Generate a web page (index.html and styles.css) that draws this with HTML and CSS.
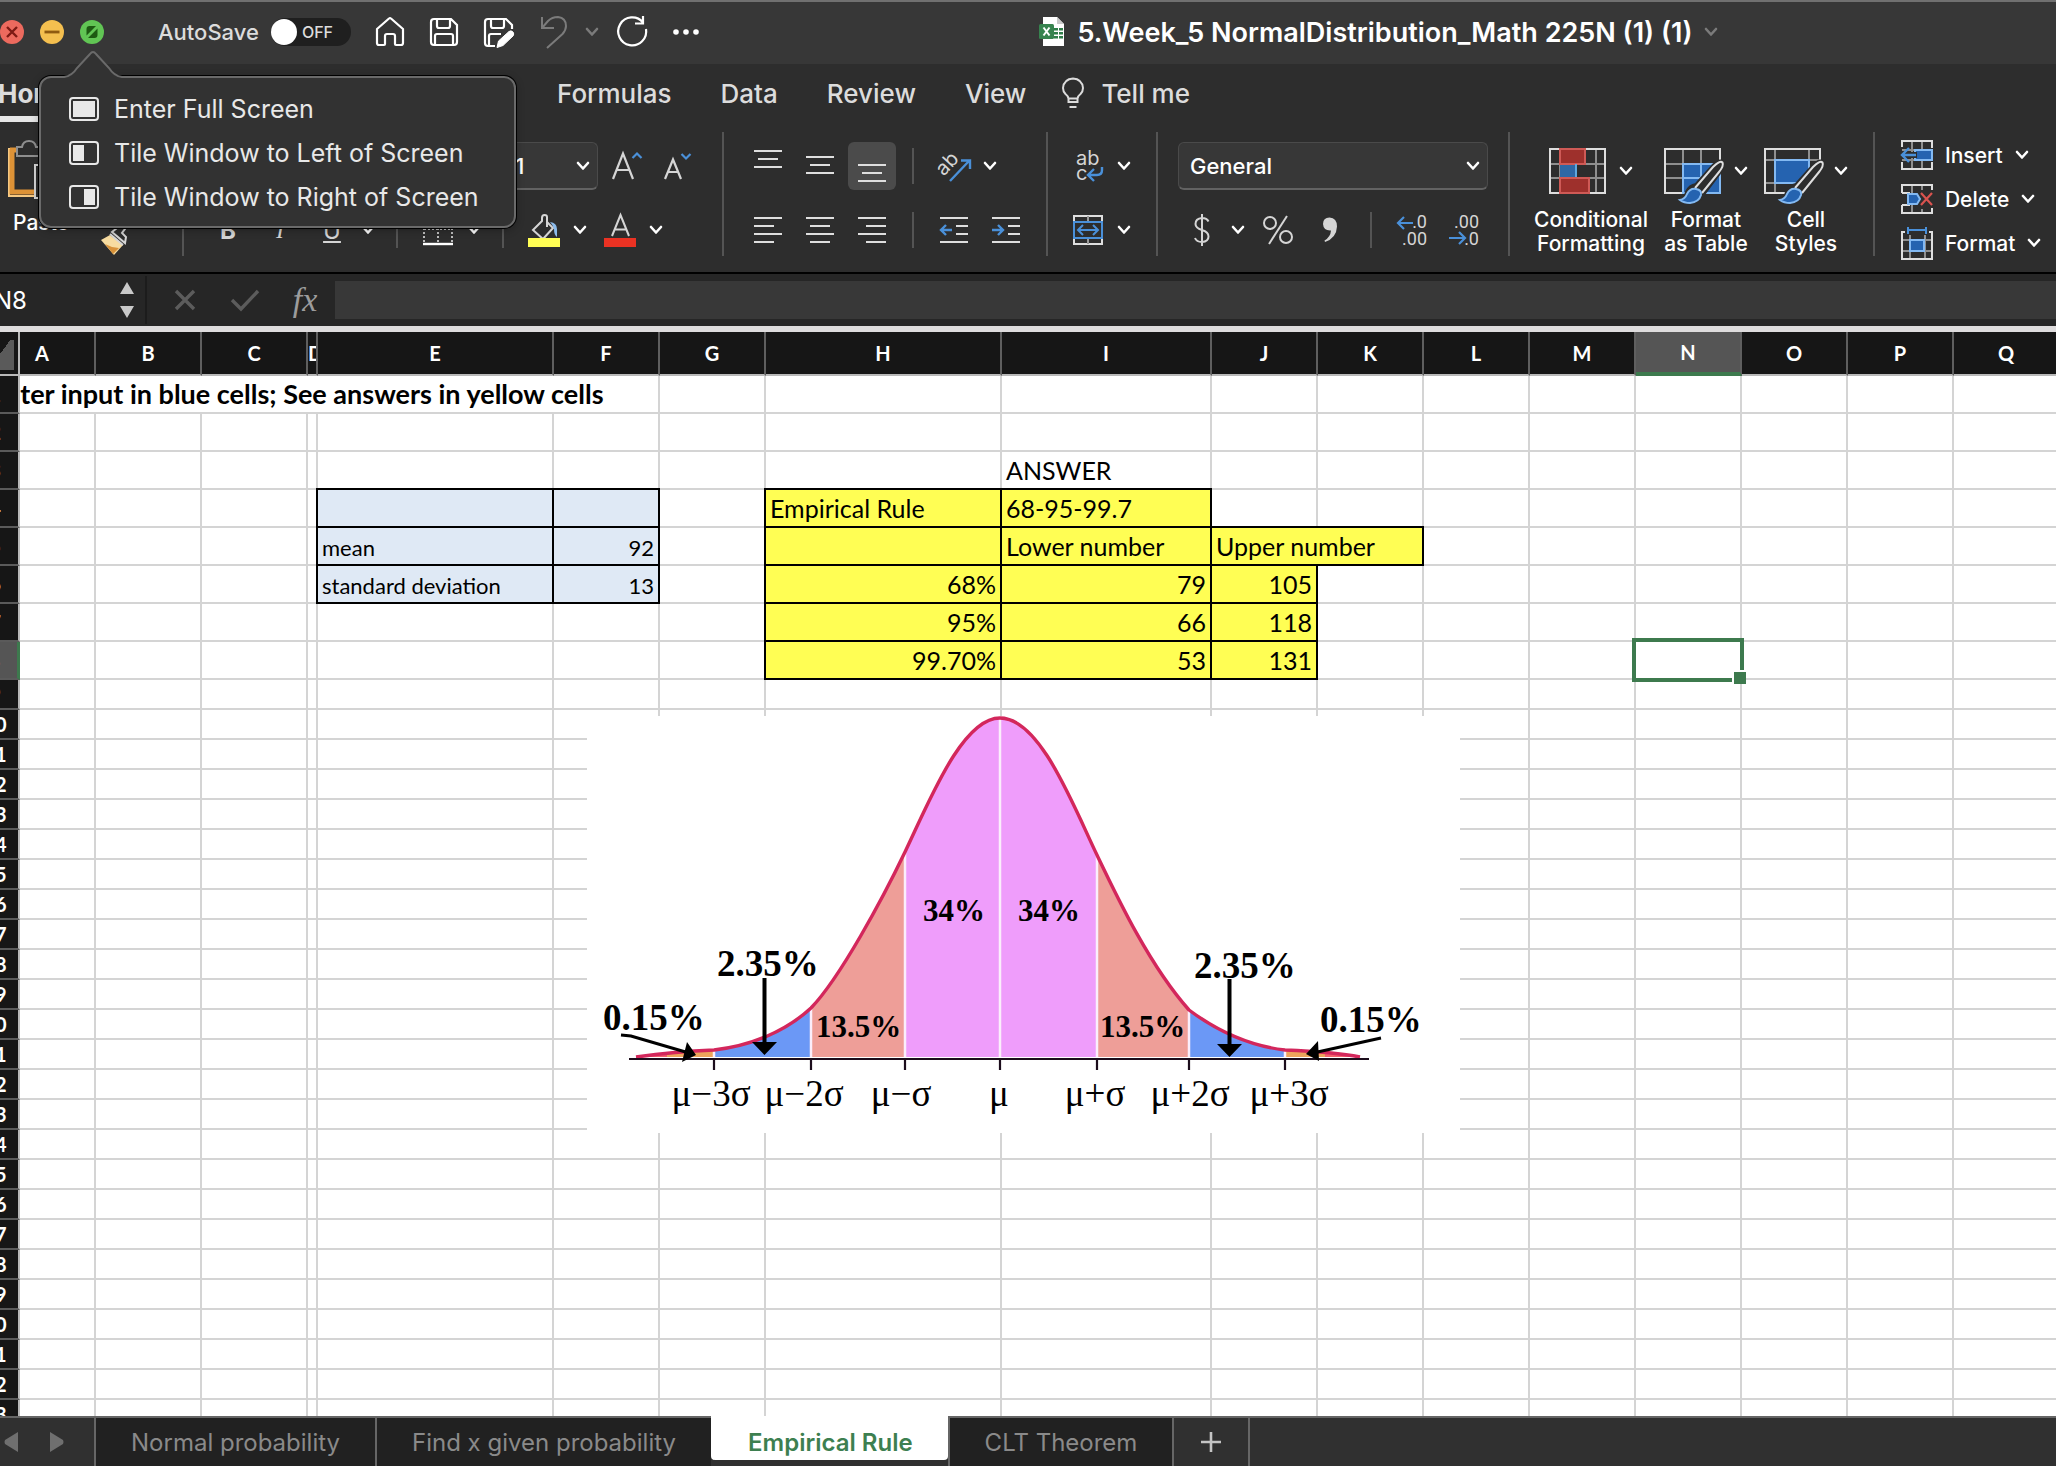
FILE: index.html
```
<!DOCTYPE html>
<html lang="en">
<head>
    <meta charset="UTF-8">
    <meta name="viewport" content="width=device-width, initial-scale=1.0">
    <title>5.Week_5 NormalDistribution_Math 225N (1) (1)</title>
    <link rel="stylesheet" href="styles.css">
</head>
<body>
    <!-- shared chevron -->
    <svg class="defs" width="0" height="0" aria-hidden="true">
        <symbol id="chev" viewBox="0 0 14 10"><path d="M2 2l5 5.5L12 2" fill="none" stroke="currentColor" stroke-width="2.6" stroke-linecap="round" stroke-linejoin="round"/></symbol>
    </svg>

    <div class="window">
        <header class="titlebar">
            <div class="lights">
                <button class="light light-close" aria-label="Close"><svg viewBox="0 0 24 24"><path d="M7 7l10 10M17 7L7 17" stroke="#7d1a14" stroke-width="2.4"/></svg></button>
                <button class="light light-min" aria-label="Minimize"><svg viewBox="0 0 24 24"><path d="M4.500 12h15" stroke="#8f5a10" stroke-width="2.8"/></svg></button>
                <button class="light light-zoom" aria-label="Zoom"><svg viewBox="0 0 24 24"><path d="M6.500 15.500V9q0-3 3-3H16zM17.500 8.500V15q0 3-3 3H8z" fill="#1d5a12"/></svg></button>
            </div>
            <label class="autosave">
                <span>AutoSave</span>
                <input type="checkbox" class="autosave-input">
                <span class="switch"><span class="knob"></span>OFF</span>
            </label>
            <div class="quick">
                <button class="quick-btn" aria-label="Home"><svg width="30" height="32" viewBox="0 0 30 32"><path d="M14 2.500q1-1 2 0L28 13v14q0 2-2 2h-5q-1 0-1-1v-8q0-2-2-2h-6q-2 0-2 2v8q0 1-1 1H4q-2 0-2-2V13z" fill="none" stroke="#fff" stroke-width="2.200" stroke-linejoin="round"/></svg></button>
                <button class="quick-btn" aria-label="Save"><svg width="30" height="32" viewBox="0 0 30 32"><path d="M5 3h17l6 6v17q0 3-3 3H5q-3 0-3-3V6q0-3 3-3zM8 3v7q0 2 2 2h9q2 0 2-2V3M6 29V20q0-2 2-2h14q2 0 2 2v9" fill="none" stroke="#fff" stroke-width="2.200"/></svg></button>
                <button class="quick-btn" aria-label="Save as"><svg width="32" height="34" viewBox="0 0 32 34"><path d="M12 31H5q-3 0-3-3V7q0-3 3-3h18l6 6v4M8 4v7q0 2 2 2h9q2 0 2-2V4M6 31V21q0-2 2-2h10" fill="none" stroke="#fff" stroke-width="2.200"/><path d="M14 32.500l1.500-6.500L26 16.500q2-1.500 4 .5 1.500 2 0 4l-10 9.500z" fill="#fff" stroke="#fff"/></svg></button>
                <button class="quick-btn quick-undo" aria-label="Undo"><svg width="30" height="34" viewBox="0 0 30 34"><path d="M3 2v11h12M3 13L9 6q4-4 10-4 8 1 8 9 0 4-3.500 8L8 33" fill="none" stroke="#7b7b7b" stroke-width="2"/></svg></button>
                <button class="quick-chev" aria-label="Undo history"><svg width="14" height="10"><use href="#chev"/></svg></button>
                <button class="quick-btn" aria-label="Redo"><svg width="32" height="34" viewBox="0 0 32 34"><path d="M27 7.500A14 14 0 1 0 30 14M27 1v7.500h-8" fill="none" stroke="#fff" stroke-width="2.200"/></svg></button>
                <button class="quick-btn" aria-label="More"><svg width="28" height="8" viewBox="0 0 28 8"><g fill="#fff"><circle cx="4" cy="4" r="2.800"/><circle cx="14" cy="4" r="2.800"/><circle cx="24" cy="4" r="2.800"/></g></svg></button>
            </div>
            <div class="doc">
                <svg width="28" height="32" viewBox="0 0 28 32"><path d="M5 1h14l7 7v22H5z" fill="#fff"/><path d="M19 1v7h7z" fill="#c9c9c9"/><path d="M16 12h4v2.500h-4zM21 12h4v2.500h-4zM16 16h4v2.500h-4zM21 16h4v2.500h-4zM16 20h4v2.500h-4zM21 20h4v2.500h-4z" fill="#2f7d49"/><rect x="1" y="8" width="15" height="15" rx="1.500" fill="#37834f"/><path d="M5.500 11.500l6 8M11.500 11.500l-6 8" stroke="#fff" stroke-width="2"/></svg>
                <h1 class="doc-title">5.Week_5 NormalDistribution_Math 225N (1) (1)</h1>
                <svg class="doc-chev" width="14" height="10"><use href="#chev"/></svg>
            </div>
        </header>

        <nav class="tabs">
            <button class="tab tab-active">Home</button>
            <button class="tab">Formulas</button>
            <button class="tab">Data</button>
            <button class="tab">Review</button>
            <button class="tab">View</button>
            <button class="tab tell"><svg width="24" height="32" viewBox="0 0 24 32"><path d="M7.500 25v-3.500Q7 19 4.500 17 2 14.500 2 11 3 2 12 1.500 21 2 22 11q0 3.500-2.500 6-2.500 2-3 4.500V25zM7.500 21.500h9M8.500 30h7" fill="none" stroke="#dcdcdc" stroke-width="2"/></svg>Tell me</button>
        </nav>

        <section class="ribbon">
            <div class="group clipboard">
                <button class="paste">
                    <svg width="66" height="60" viewBox="0 0 66 60"><path d="M6 9H1v47h26" fill="none" stroke="#f7c982" stroke-width="2"/><path d="M2 10h8M4 9v43h24" fill="none" stroke="#dd9236" stroke-width="5"/><path d="M9 16V7h5q1-6 7-6t7 6h5v9z" fill="#2d2d2d" stroke="#8f8f8f" stroke-width="2"/><path d="M27 25h24v33H27z" fill="#2d2d2d" stroke="#d5d5d5" stroke-width="2"/></svg>
                    <span>Paste</span>
                </button>
                <button class="tool" aria-label="Format painter"><svg width="32" height="48" viewBox="0 0 32 48"><path d="M1 32l9-5 13 10-9 10z" fill="#f7dca0"/><path d="M5 36l7 3 7 1-6 6z" fill="#d8923a"/><path d="M10 26l13 11M12 24l13 11 1-6-4-4 9-12-4-4-10 11z" fill="none" stroke="#d5d5d5" stroke-width="2"/></svg></button>
            </div>

            <div class="group font">
                <div class="row row-end">
                    <label class="picker picker-size">
                        <select aria-label="Font size"><option>11</option></select>
                        <svg width="14" height="10"><use href="#chev"/></svg>
                    </label>
                    <button class="tool" aria-label="Increase font size"><svg width="32" height="32" viewBox="0 0 32 32"><path d="M3 29L13 3.500 23 29M6.500 20h13" fill="none" stroke="#d5d5d5" stroke-width="2.200"/><path d="M22.500 8l4.500-4.500L31.500 8" fill="none" stroke="#4a90d9" stroke-width="2.200"/></svg></button>
                    <button class="tool" aria-label="Decrease font size"><svg width="32" height="32" viewBox="0 0 32 32"><path d="M3 29l8-19.500L19 29M6 22h10" fill="none" stroke="#d5d5d5" stroke-width="2.200"/><path d="M19.500 4l4.500 4.500L28.500 4" fill="none" stroke="#4a90d9" stroke-width="2.200"/></svg></button>
                </div>
                <div class="row">
                    <button class="tool glyph glyph-b">B</button>
                    <button class="tool glyph glyph-i">I</button>
                    <button class="tool glyph glyph-u">U</button>
                    <button class="chev" aria-label="Underline options"><svg width="14" height="10"><use href="#chev"/></svg></button>
                    <span class="sep"></span>
                    <button class="tool" aria-label="Borders"><svg width="32" height="32" viewBox="0 0 32 32"><path d="M2 2h28v26M2 2v26M16 2v26M2 15h28" fill="none" stroke="#bdbdbd" stroke-width="2" stroke-dasharray="2 2"/><path d="M1 30h30" stroke="#fff" stroke-width="2.400"/></svg></button>
                    <button class="chev" aria-label="Border options"><svg width="14" height="10"><use href="#chev"/></svg></button>
                    <span class="sep"></span>
                    <button class="tool" aria-label="Fill color"><svg width="32" height="34" viewBox="0 0 32 34"><path d="M19 14V4q0-2-2.500-2T14 5v3L5 17l10 9 10-11-6-6" fill="none" stroke="#d5d5d5" stroke-width="2"/><path d="M22 9q7 1 7 7v8q-3-2-3-8-1-4-4-7z" fill="#8cbcec"/><path d="M0 25h32v9H0z" fill="#fffe54"/></svg></button>
                    <button class="chev" aria-label="Fill colors"><svg width="14" height="10"><use href="#chev"/></svg></button>
                    <button class="tool" aria-label="Font color"><svg width="32" height="34" viewBox="0 0 32 34"><path d="M8 23L16.500 2 25 23M11 16.500h11" fill="none" stroke="#d5d5d5" stroke-width="2"/><path d="M0 25h32v9H0z" fill="#ea3223"/></svg></button>
                    <button class="chev" aria-label="Font colors"><svg width="14" height="10"><use href="#chev"/></svg></button>
                </div>
            </div>

            <div class="group align">
                <div class="row">
                    <button class="tool" aria-label="Top align"><svg width="28" height="32" viewBox="0 0 28 32"><path d="M0 1h28M4 9h20M0 17h28" stroke="#dedede" stroke-width="2"/></svg></button>
                    <button class="tool" aria-label="Middle align"><svg width="28" height="32" viewBox="0 0 28 32"><path d="M0 7h28M4 15h20M0 23h28" stroke="#dedede" stroke-width="2"/></svg></button>
                    <button class="tool tool-on" aria-label="Bottom align"><svg width="28" height="32" viewBox="0 0 28 32"><path d="M0 15h28M4 23h20M0 31h28" stroke="#dedede" stroke-width="2"/></svg></button>
                    <span class="sep"></span>
                    <button class="tool" aria-label="Orientation"><svg width="34" height="34" viewBox="0 0 34 34"><text class="icon-text" x="3" y="25" transform="rotate(-47 8 22)">ab</text><path d="M13 32L32 12M24 11.500h9V20" fill="none" stroke="#4a90d9" stroke-width="2.400"/></svg></button>
                    <button class="chev" aria-label="Orientation options"><svg width="14" height="10"><use href="#chev"/></svg></button>
                </div>
                <div class="row">
                    <button class="tool" aria-label="Align left"><svg width="28" height="28" viewBox="0 0 28 28"><path d="M0 2h28M0 10h20M0 18h28M0 26h20" stroke="#dedede" stroke-width="2"/></svg></button>
                    <button class="tool" aria-label="Center"><svg width="28" height="28" viewBox="0 0 28 28"><path d="M0 2h28M4 10h20M0 18h28M4 26h20" stroke="#dedede" stroke-width="2"/></svg></button>
                    <button class="tool" aria-label="Align right"><svg width="28" height="28" viewBox="0 0 28 28"><path d="M0 2h28M8 10h20M0 18h28M8 26h20" stroke="#dedede" stroke-width="2"/></svg></button>
                    <span class="sep"></span>
                    <button class="tool" aria-label="Decrease indent"><svg width="28" height="28" viewBox="0 0 28 28"><path d="M0 2h28M16 10h12M16 18h12M0 26h28" stroke="#dedede" stroke-width="2"/><path d="M12 14H1M6 9l-5 5 5 5" fill="none" stroke="#4a90d9" stroke-width="2.400"/></svg></button>
                    <button class="tool" aria-label="Increase indent"><svg width="28" height="28" viewBox="0 0 28 28"><path d="M0 2h28M16 10h12M16 18h12M0 26h28" stroke="#dedede" stroke-width="2"/><path d="M0 14h11M6 9l5 5-5 5" fill="none" stroke="#4a90d9" stroke-width="2.400"/></svg></button>
                </div>
            </div>

            <div class="group wrap">
                <div class="row">
                    <button class="tool" aria-label="Wrap text"><svg width="30" height="34" viewBox="0 0 30 34"><text class="icon-text" x="3" y="16">ab</text><text class="icon-text" x="3" y="31">c</text><path d="M29 18v3q0 5-5 5h-9M21 20l-6 6 6 6" fill="none" stroke="#4a90d9" stroke-width="2.400"/></svg></button>
                    <button class="chev" aria-label="Wrap options"><svg width="14" height="10"><use href="#chev"/></svg></button>
                </div>
                <div class="row">
                    <button class="tool" aria-label="Merge"><svg width="30" height="30" viewBox="0 0 30 30"><path d="M1 7V1h28v6M1 23v6h28v-6" fill="none" stroke="#dedede" stroke-width="2"/><path d="M15 1v6M15 23v6" stroke="#9b9b9b" stroke-width="2"/><path d="M1 7h28v16H1zM5 15h20M10 10l-5 5 5 5M20 10l5 5-5 5" fill="none" stroke="#4a90d9" stroke-width="2"/></svg></button>
                    <button class="chev" aria-label="Merge options"><svg width="14" height="10"><use href="#chev"/></svg></button>
                </div>
            </div>

            <div class="group number">
                <label class="picker">
                    <select aria-label="Number format"><option>General</option></select>
                    <svg width="14" height="10"><use href="#chev"/></svg>
                </label>
                <div class="row">
                    <button class="tool" aria-label="Currency"><svg width="20" height="34" viewBox="0 0 20 34"><path d="M16.500 8.500Q15 5 10 5 3.500 5.500 3.500 11q0 4 6.500 6t6.500 6.500q0 5-6.500 5.500-5.500 0-7-4M10 1v32" fill="none" stroke="#d5d5d5" stroke-width="2"/></svg></button>
                    <button class="chev" aria-label="Currency options"><svg width="14" height="10"><use href="#chev"/></svg></button>
                    <button class="tool" aria-label="Percent"><svg width="32" height="30" viewBox="0 0 32 30"><g fill="none" stroke="#d5d5d5" stroke-width="2"><circle cx="8" cy="8" r="6"/><circle cx="24" cy="22" r="6"/><path d="M25 1L7 29"/></g></svg></button>
                    <button class="tool" aria-label="Comma"><svg width="16" height="28" viewBox="0 0 16 28"><path d="M1 8q0-6.500 6.500-6.500Q15 2 15 10.500 14.500 22 3 26l-.5-1.500Q8.500 21 9 14.500 1.500 15 1 8z" fill="#d5d5d5"/></svg></button>
                    <span class="sep"></span>
                    <button class="tool" aria-label="Increase decimal"><svg width="32" height="34" viewBox="0 0 32 34"><text class="icon-num" x="31" y="15" text-anchor="end">.0</text><text class="icon-num" x="31" y="32" text-anchor="end">.00</text><path d="M17 10H2M8 4L2 10l6 6" fill="none" stroke="#4a90d9" stroke-width="2.200"/></svg></button>
                    <button class="tool" aria-label="Decrease decimal"><svg width="32" height="34" viewBox="0 0 32 34"><text class="icon-num" x="31" y="15" text-anchor="end">.00</text><text class="icon-num" x="31" y="32" text-anchor="end">.0</text><path d="M1 25h16M11 19l6 6-6 6" fill="none" stroke="#4a90d9" stroke-width="2.200"/></svg></button>
                </div>
            </div>

            <div class="group styles">
                <button class="big">
                    <span class="big-icon"><svg width="60" height="56" viewBox="0 0 60 56"><path d="M11 1v44M47 1v44M1 16h56M1 30h56" stroke="#8f8f8f" stroke-width="2"/><path d="M1 1h55v44H1z" fill="none" stroke="#dedede" stroke-width="2"/><path d="M11 1h25v15H11z" fill="#9e302c" stroke="#cf5a56" stroke-width="2"/><path d="M11 17h16v12H11z" fill="#2e68a6"/><path d="M27 16v13" stroke="#5fa8e0" stroke-width="2"/><path d="M11 30h29v15H11z" fill="#9e302c" stroke="#cf5a56" stroke-width="2"/></svg><svg width="14" height="10"><use href="#chev"/></svg></span>
                    Conditional<br>Formatting
                </button>
                <button class="big">
                    <span class="big-icon"><svg width="60" height="56" viewBox="0 0 60 56"><path d="M19 1v44M37 1v15M1 16h18M1 30h18" stroke="#8f8f8f" stroke-width="2"/><path d="M56 12V1H1v44h18" fill="none" stroke="#dedede" stroke-width="2"/><path d="M19 16h37v29H19z" fill="#2563b0" stroke="#83b9f2" stroke-width="2"/><path d="M37 16v14M19 30h20" stroke="#83b9f2" stroke-width="2"/><path d="M59 15q0 4-4 10L40 45q-4 9-13 10-7 0-11-4 6-1 7-7 3-6 9-7l17-19q7-7 10-3z" fill="#2d2d2d" stroke="#2d2d2d" stroke-width="4"/><path d="M31 40l18-21q7-7 9.500-4.500Q60 18 55 24L38 45" fill="none" stroke="#dedede" stroke-width="2"/><path d="M16 52q5-1 7-6 3-6 9-5 6 1 5 6-2 7-11 8-6 0-10-3z" fill="#2563b0" stroke="#83b9f2" stroke-width="2"/></svg><svg width="14" height="10"><use href="#chev"/></svg></span>
                    Format<br>as Table
                </button>
                <button class="big">
                    <span class="big-icon"><svg width="60" height="56" viewBox="0 0 60 56"><path d="M11 1v44M45 1v10M1 12h55M1 35h20" stroke="#8f8f8f" stroke-width="2"/><path d="M56 12V1H1v44h20" fill="none" stroke="#dedede" stroke-width="2"/><path d="M11 12h34v23H11z" fill="#2563b0" stroke="#83b9f2" stroke-width="2"/><path d="M59 15q0 4-4 10L40 45q-4 9-13 10-7 0-11-4 6-1 7-7 3-6 9-7l17-19q7-7 10-3z" fill="#2d2d2d" stroke="#2d2d2d" stroke-width="4"/><path d="M31 40l18-21q7-7 9.500-4.500Q60 18 55 24L38 45" fill="none" stroke="#dedede" stroke-width="2"/><path d="M16 52q5-1 7-6 3-6 9-5 6 1 5 6-2 7-11 8-6 0-10-3z" fill="#2563b0" stroke="#83b9f2" stroke-width="2"/></svg><svg width="14" height="10"><use href="#chev"/></svg></span>
                    Cell<br>Styles
                </button>
            </div>

            <div class="group cells">
                <button class="line-btn"><svg width="32" height="34" viewBox="0 0 32 34"><path d="M11 3v28M21 3v28M1 12h30M1 22h30" stroke="#8f8f8f" stroke-width="2"/><path d="M1 9V3h30v7M1 24v7h30v-7" fill="none" stroke="#dedede" stroke-width="2"/><path d="M14 12h17v10H14z" fill="#2563b0" stroke="#83b9f2" stroke-width="2"/><path d="M0 17h16" stroke="#2d2d2d" stroke-width="6"/><path d="M15 17H2M8 10l-7 7 7 7" fill="none" stroke="#4a90d9" stroke-width="2.400"/></svg>Insert<svg width="14" height="10"><use href="#chev"/></svg></button>
                <button class="line-btn"><svg width="32" height="34" viewBox="0 0 32 34"><path d="M11 3v28M21 3v5M21 27v4" stroke="#8f8f8f" stroke-width="2"/><path d="M1 11V3h30v5M1 11h8M1 23v8h30v-5M1 23h8" fill="none" stroke="#dedede" stroke-width="2"/><path d="M7 12h9l3 5-3 5H7z" fill="#2563b0" stroke="#83b9f2" stroke-width="2"/><path d="M20 11l11 12M31 11L20 23" stroke="#d9534f" stroke-width="2.200"/></svg>Delete<svg width="14" height="10"><use href="#chev"/></svg></button>
                <button class="line-btn"><svg width="32" height="34" viewBox="0 0 32 34"><path d="M9 9v24M24 9v24M1 14h30M1 25h30" stroke="#8f8f8f" stroke-width="2"/><path d="M4 6H1v27h30V6h-3" fill="none" stroke="#dedede" stroke-width="2"/><path d="M9 14h14v11H9z" fill="#2563b0" stroke="#83b9f2" stroke-width="2"/><path d="M7 1v7M25 1v7M7 4h18" stroke="#4a90d9" stroke-width="2"/></svg>Format<svg width="14" height="10"><use href="#chev"/></svg></button>
            </div>
        </section>

        <div class="formula-bar">
            <input class="name-box" aria-label="Name box" value="N8">
            <div class="stepper"><svg width="16" height="40" viewBox="0 0 16 40"><path d="M8 2l7 12H1zM8 38L1 26h14z" fill="#c9c9c9"/></svg></div>
            <button class="fbtn" aria-label="Cancel"><svg width="22" height="22" viewBox="0 0 22 22"><path d="M2 2l18 18M20 2L2 20" stroke="#5c5c5c" stroke-width="3.400"/></svg></button>
            <button class="fbtn" aria-label="Enter"><svg width="30" height="22" viewBox="0 0 30 22"><path d="M2 11l9 9L28 2" fill="none" stroke="#5c5c5c" stroke-width="3.400"/></svg></button>
            <button class="fbtn fx">fx</button>
            <input class="formula" aria-label="Formula">
        </div>

        <main class="sheet">
            <table class="grid">
                <colgroup id="cols"></colgroup>
                <thead><tr id="heads"></tr></thead>
                <tbody id="rows"></tbody>
            </table>
            <svg class="chart" viewBox="587 716 873 417" role="img" aria-label="Empirical rule curve">
                <defs>
                    <path id="curve" d="M636 1057C665 1053 690 1051 714 1050 750 1046 785 1032 811 1008 840 978 883 898 905 852 929 802 962 718 1000 718 1040 718 1073 805 1097 855 1119 901 1150 966 1189 1010 1216 1030 1250 1046 1285 1050 1310 1051 1335 1052 1360 1057"/>
                    <clipPath id="under"><use href="#curve"/></clipPath>
                </defs>
                <path d="M587 716h873v417H587z" fill="#fff"/>
                <g clip-path="url(#under)">
                    <path d="M629 716h38v343h-38zM1325 716h40v343h-40z" fill="#f2606c"/>
                    <path d="M667 716h47v343h-47zM1285 716h40v343h-40z" fill="#eda45c"/>
                    <path d="M714 716h97v343h-97zM1189 716h96v343h-96z" fill="#6b98f6"/>
                    <path d="M811 716h94v343h-94zM1097 716h92v343h-92z" fill="#ee9e98"/>
                    <path d="M905 716h192v343H905z" fill="#ef9dfb"/>
                    <path d="M714 716v343M811 716v343M905 716v343M1000 716v343M1097 716v343M1189 716v343M1285 716v343" stroke="#fbeefb" stroke-width="2.500"/>
                </g>
                <use href="#curve" fill="none" stroke="#d3275c" stroke-width="3.400"/>
                <path d="M629 1059h740M714 1059v11M811 1059v11M905 1059v11M1000 1059v11M1097 1059v11M1189 1059v11M1285 1059v11" stroke="#1c0d1c" stroke-width="2.200"/>
                <path d="M764.500 978v68M1229.500 979v68" stroke="#000" stroke-width="4"/>
                <path d="M752 1042h25l-12.500 13zM1217 1044h25l-12.500 13zM687 1042l9 13-14 7zM1306 1054l12-13 1 20z" fill="#000"/>
                <path d="M621 1035l10 1 58 17M1381 1038l-68 15" fill="none" stroke="#000" stroke-width="3"/>
                <g class="chart-bold">
                    <text x="923" y="921">34%</text>
                    <text x="1018" y="921">34%</text>
                    <text x="816" y="1037">13.5%</text>
                    <text x="1100" y="1037">13.5%</text>
                </g>
                <g class="chart-bold chart-outer">
                    <text x="717" y="976">2.35%</text>
                    <text x="1194" y="978">2.35%</text>
                    <text x="603" y="1030">0.15%</text>
                    <text x="1320" y="1032">0.15%</text>
                </g>
                <g class="chart-axis">
                    <text x="711" y="1106">μ−3σ</text>
                    <text x="804" y="1106">μ−2σ</text>
                    <text x="901" y="1106">μ−σ</text>
                    <text x="999" y="1106">μ</text>
                    <text x="1095" y="1106">μ+σ</text>
                    <text x="1190" y="1106">μ+2σ</text>
                    <text x="1289" y="1106">μ+3σ</text>
                </g>
            </svg>
        </main>

        <footer class="sheet-tabs">
            <div class="sheet-nav"><svg width="62" height="22" viewBox="0 0 62 22"><path d="M14 1v20L1 13q-1-2 0-4zM46 1v20l13-8q1-2 0-4z" fill="#6f6f6f"/></svg></div>
            <button class="sheet-tab">Normal probability</button>
            <button class="sheet-tab">Find x given probability</button>
            <button class="sheet-tab sheet-tab-active">Empirical Rule</button>
            <button class="sheet-tab">CLT Theorem</button>
            <button class="sheet-add" aria-label="Add sheet"><svg width="22" height="22" viewBox="0 0 22 22"><path d="M11 1v20M1 11h20" stroke="#c4c4c4" stroke-width="2.600"/></svg></button>
        </footer>

        <div class="popover">
            <svg class="popover-tip" width="64" height="28" viewBox="0 0 64 28"><path d="M0 26.500h3q8-1 13-9L29 3q3-4 6 0l13 14.500q5 8 13 9h3V28H0z" fill="#323232"/><path d="M0 26h3q8-1 13-9L29 3q3-4 6 0l13 14q5 8 13 9h3" fill="none" stroke="#6a6a6a" stroke-width="2"/></svg>
            <button class="popover-item"><svg width="30" height="24" viewBox="0 0 30 24"><rect x="1" y="1" width="28" height="22" rx="3" fill="none" stroke="#e8e8e8" stroke-width="2"/><path d="M4 4h22v16H4z" fill="#e8e8e8"/></svg>Enter Full Screen</button>
            <button class="popover-item"><svg width="30" height="24" viewBox="0 0 30 24"><rect x="1" y="1" width="28" height="22" rx="3" fill="none" stroke="#e8e8e8" stroke-width="2"/><path d="M4 4h11v16H4z" fill="#e8e8e8"/></svg>Tile Window to Left of Screen</button>
            <button class="popover-item"><svg width="30" height="24" viewBox="0 0 30 24"><rect x="1" y="1" width="28" height="22" rx="3" fill="none" stroke="#e8e8e8" stroke-width="2"/><path d="M15 4h11v16H15z" fill="#e8e8e8"/></svg>Tile Window to Right of Screen</button>
        </div>
    </div>

    <script src="script.js"></script>
</body>
</html>
```
FILE: script.js
```
// Column name and width; the first one is the row number column
const columns = [
    ['', 48], ['A', 76], ['B', 106], ['C', 106], ['D', 10], ['E', 236], ['F', 106],
    ['G', 106], ['H', 236], ['I', 210], ['J', 106], ['K', 106], ['L', 106],
    ['M', 106], ['N', 106], ['O', 106], ['P', 106], ['Q', 106]
]
const rowCount = 33
const selected = { col: 'N', row: 8 }

// Cell contents: text, classes, colspan
const cells = {
    A1: ['Enter input in blue cells; See answers in yellow cells', 'heading', 6],
    I3: ['ANSWER', ''],
    E4: ['', 'box blue'], F4: ['', 'box blue'],
    E5: ['mean', 'box blue'], F5: ['92', 'box blue num'],
    E6: ['standard deviation', 'box blue'], F6: ['13', 'box blue num'],
    H4: ['Empirical Rule', 'box yellow'], I4: ['68-95-99.7', 'box yellow'],
    H5: ['', 'box yellow'], I5: ['Lower number', 'box yellow'], J5: ['Upper number', 'box yellow', 2],
    H6: ['68%', 'box yellow num'], I6: ['79', 'box yellow num'], J6: ['105', 'box yellow num'],
    H7: ['95%', 'box yellow num'], I7: ['66', 'box yellow num'], J7: ['118', 'box yellow num'],
    H8: ['99.70%', 'box yellow num'], I8: ['53', 'box yellow num'], J8: ['131', 'box yellow num']
}

const colsEl = document.getElementById('cols')
const headsEl = document.getElementById('heads')
const rowsEl = document.getElementById('rows')

columns.forEach(([name, width]) => {
    const col = document.createElement('col')
    col.style.width = width + 'px'
    colsEl.appendChild(col)

    const th = document.createElement('th')
    th.scope = 'col'
    th.textContent = name
    if (!name) th.className = 'corner'
    if (name === 'A') th.className = 'first'
    if (name === selected.col) th.className = 'current'
    headsEl.appendChild(th)
})

for (let r = 1; r <= rowCount; r++) {
    const tr = document.createElement('tr')
    if (r <= 8) tr.className = 'tall'

    const th = document.createElement('th')
    th.scope = 'row'
    th.textContent = r
    if (r === selected.row) th.className = 'current'
    tr.appendChild(th)

    for (let c = 1; c < columns.length; c++) {
        const td = document.createElement('td')
        const cell = cells[columns[c][0] + r]
        if (cell) {
            const text = document.createElement('span')
            text.textContent = cell[0]
            td.appendChild(text)
            td.className = cell[1]
            if (cell[2]) {
                td.colSpan = cell[2]
                c += cell[2] - 1
            }
        }
        if (columns[c][0] === selected.col && r === selected.row) td.className = 'selected'
        tr.appendChild(td)
    }
    rowsEl.appendChild(tr)
}
```
FILE: styles.css
```
* {
    margin: 0;
    padding: 0;
    box-sizing: border-box;
}

body {
    font-family: Inter, "Liberation Sans", sans-serif;
    font-size: 22px;
    color: #fff;
    background: #2d2d2d;
    overflow: hidden;
}

button,
input,
select {
    font: inherit;
    color: inherit;
    background: none;
    border: 0;
    outline: 0;
}

svg {
    display: block;
    flex: none;
    overflow: visible;
}

.defs {
    position: absolute;
}

.window {
    position: relative;
    display: flex;
    flex-direction: column;
    height: 100vh;
}

/* Title bar */
.titlebar {
    display: flex;
    align-items: center;
    height: 64px;
    padding-bottom: 2px;
    background: #373737;
    border-top: 2px solid #707070;
    flex: none;
}

.lights {
    display: flex;
    gap: 16px;
}

.light {
    width: 24px;
    height: 24px;
    border-radius: 50%;
}

.light-close {
    background: #ec6a5e;
}

.light-min {
    background: #f4bf4f;
}

.light-zoom {
    background: #61c554;
}

.autosave {
    display: flex;
    align-items: center;
    gap: 12px;
    margin-left: 54px;
    font-weight: 500;
    color: #dcdcdc;
}

.autosave-input {
    position: absolute;
    opacity: 0;
}

.switch {
    display: flex;
    align-items: center;
    gap: 5px;
    width: 80px;
    height: 28px;
    border-radius: 14px;
    background: #1f1f1f;
    font-size: 16px;
}

.knob {
    width: 26px;
    height: 26px;
    border-radius: 50%;
    background: #fff;
}

.quick {
    display: flex;
    align-items: center;
    gap: 24px;
    margin-left: 24px;
}

.quick-chev {
    color: #7b7b7b;
    margin: 0 -7px 0 -8px;
}

.doc {
    display: flex;
    align-items: center;
    gap: 11px;
    margin: 0 auto;
}

.doc-title {
    font-size: 27px;
    font-weight: 600;
}

.doc-chev {
    color: #7b7b7b;
}

/* Ribbon tabs */
.tabs {
    display: flex;
    align-items: center;
    gap: 49px;
    height: 58px;
    flex: none;
    font-size: 26px;
    font-weight: 500;
    color: #dcdcdc;
}

.tab {
    height: 58px;
}

.tab-active {
    width: 510px;
    margin-left: -2px;
    text-align: left;
    font-weight: 700;
    border-bottom: 6px solid #e6e6e6;
    padding-top: 6px;
}

.tell {
    display: flex;
    align-items: center;
    gap: 16px;
    margin-left: -14px;
}

/* Ribbon */
.ribbon {
    display: flex;
    height: 152px;
    padding: 10px 0 16px;
    border-bottom: 2px solid #000;
    flex: none;
    overflow: hidden;
}

.group {
    display: flex;
    flex-direction: column;
    gap: 16px;
    flex: none;
    padding: 10px 16px 0 20px;
    border-left: 2px solid #545454;
}

.clipboard {
    flex-direction: row;
    align-items: flex-end;
    gap: 10px;
    width: 182px;
    padding: 8px 0 0;
    border-left: 0;
}

.paste {
    display: flex;
    flex-direction: column;
    align-items: center;
    align-self: flex-start;
    gap: 10px;
    width: 82px;
    font-weight: 500;
    font-size: 21px;
}

.wrap {
    padding-left: 16px;
    padding-right: 20px;
}

.number {
    padding-right: 20px;
}

.row {
    display: flex;
    align-items: center;
    gap: 4px;
    height: 48px;
}

.row-end {
    justify-content: flex-end;
    padding-right: 4px;
}

.font {
    width: 540px;
}

.tool {
    display: flex;
    align-items: center;
    justify-content: center;
    width: 48px;
    height: 48px;
    border-radius: 6px;
    flex: none;
}

.tool-on {
    background: #4b4b4b;
}

.glyph {
    font-size: 24px;
    color: #d5d5d5;
}

.glyph-b {
    font-weight: 700;
}

.glyph-i {
    font-family: "Liberation Serif", serif;
    font-style: italic;
}

.glyph-u {
    text-decoration: underline;
}

.chev {
    display: flex;
    align-items: center;
    justify-content: center;
    width: 24px;
    height: 48px;
    margin-left: -4px;
}

.sep {
    width: 2px;
    height: 36px;
    margin: 0 12px;
    background: #545454;
}

.picker {
    display: flex;
    align-items: center;
    width: 310px;
    height: 48px;
    padding-right: 7px;
    background: #373737;
    border: 1px solid #4a4a4a;
    border-bottom: 2px solid #626262;
    border-radius: 6px;
}

.picker select {
    flex: 1;
    height: 44px;
    appearance: none;
    padding-left: 11px;
    font-weight: 500;
}

.picker-size {
    width: 104px;
}

.icon-text {
    font: 20px Inter, sans-serif;
    fill: #d5d5d5;
}

.icon-num {
    font: 18px Roboto, sans-serif;
    fill: #d5d5d5;
}

.styles {
    flex-direction: row;
    gap: 16px;
    padding: 16px 25px 0 24px;
}

.big {
    display: flex;
    flex-direction: column;
    align-items: center;
    font-size: 21px;
    line-height: 24px;
    font-weight: 500;
}

.big-icon {
    display: flex;
    gap: 10px;
    height: 68px;
}

.big-icon svg:last-child {
    margin-top: 18px;
}

.cells {
    gap: 10px;
    padding: 6px 0 0 26px;
}

.line-btn {
    display: flex;
    align-items: center;
    gap: 12px;
    height: 34px;
    font-size: 21px;
    font-weight: 500;
}

/* Formula bar */
.formula-bar {
    display: flex;
    align-items: center;
    height: 58px;
    background: #262626;
    border-bottom: 6px solid #dedcdd;
    flex: none;
}

.name-box {
    width: 119px;
    margin-left: -6px;
    font-size: 24px;
}

.stepper {
    width: 34px;
    height: 48px;
    padding: 4px 6px;
    border-right: 2px solid #1c1c1c;
}

.fbtn {
    display: flex;
    align-items: center;
    justify-content: center;
    width: 60px;
}

.stepper + .fbtn {
    margin-left: 8px;
}

.fx {
    font-family: "Liberation Serif", serif;
    font-style: italic;
    font-size: 34px;
    line-height: 40px;
    color: #9c9c9c;
}

.formula {
    flex: 1;
    height: 38px;
    background: #383838;
}

/* Sheet */
.sheet {
    position: relative;
    flex: 1;
    min-height: 0;
    overflow: hidden;
    background: #fff;
    color: #000;
    font-family: Lato, Carlito, sans-serif;
}

.grid {
    table-layout: fixed;
    width: 2088px;
    margin-left: -28px;
    border-collapse: separate;
    border-spacing: 0;
}

.grid th,
.grid td {
    height: 30px;
    overflow: hidden;
    white-space: nowrap;
    line-height: 26px;
}

.grid th {
    background: #161616;
    color: #fff;
    font-size: 20px;
    border-right: 2px solid #b9b9b9;
    border-bottom: 2px solid #5a5a5a;
}

.grid thead th {
    height: 44px;
    border-right-color: #5f5f5f;
    border-bottom-color: #b9b9b9;
}

.grid thead .corner {
    border-right-color: #b9b9b9;
    background: linear-gradient(126deg, #161616 60%, #5a5a5a 60%) no-repeat 0 8px / 42px 30px #161616;
}

.grid thead .first {
    padding-right: 30px;
}

.grid .current {
    background: #555;
}

.grid thead .current {
    border-bottom: 4px solid #3d7a4e;
}

.grid tbody .current {
    border-right: 3px solid #3d7a4e;
}

.grid td {
    padding: 0 4px 5px;
    vertical-align: bottom;
    font-size: 25px;
    border-right: 2px solid #d4d4d4;
    border-bottom: 2px solid #d4d4d4;
}

.grid .tall th,
.grid .tall td {
    height: 38px;
}

.grid td:empty {
    padding: 0;
}

.grid .heading {
    font-size: 27px;
    font-weight: 700;
}

.heading span {
    margin-left: -34px;
}

.grid .box {
    border-color: #000;
    box-shadow: -2px 0 #000, 0 -2px #000, -2px -2px #000;
}

.grid .blue {
    background: #dfe9f5;
    padding-bottom: 3px;
    font-size: 22px;
}

.grid .yellow {
    background: #fffe54;
}

.grid .num {
    text-align: right;
}

.grid .selected {
    position: relative;
    overflow: visible;
}

.selected::before {
    content: "";
    position: absolute;
    inset: -4px;
    border: 4px solid #3d7a4e;
}

.selected::after {
    content: "";
    position: absolute;
    right: -6px;
    bottom: -6px;
    width: 12px;
    height: 12px;
    background: #3d7a4e;
    border: 2px solid #fff;
    border-right: 0;
    border-bottom: 0;
}

.chart {
    position: absolute;
    left: 587px;
    top: 384px;
    width: 873px;
    height: 417px;
}

.chart-bold {
    font: bold 31px "Liberation Serif", serif;
}

.chart-outer {
    font-size: 37px;
}

.chart-axis {
    font: 37px "Liberation Serif", serif;
    text-anchor: middle;
}

/* Sheet tabs */
.sheet-tabs {
    display: flex;
    height: 50px;
    background: #303030;
    border-top: 2px solid #666;
    flex: none;
    font-size: 24px;
    color: #8a8a8a;
}

.sheet-nav {
    display: flex;
    align-items: center;
    width: 94px;
    padding-left: 4px;
}

.sheet-tab {
    padding: 0 35px;
    background: #212121;
    border-left: 2px solid #666;
}

.sheet-tab-active {
    margin: -2px 0 6px;
    padding-top: 8px;
    background: #fff;
    color: #3d7f50;
    font-weight: 600;
    border-left-color: #fff;
    border-radius: 0 0 4px 4px;
}

.sheet-add {
    width: 78px;
    padding-left: 26px;
    border-left: 2px solid #666;
    border-right: 2px solid #666;
}

/* Window menu */
.popover {
    position: absolute;
    left: 39px;
    top: 76px;
    width: 477px;
    padding: 9px 28px 7px;
    background: #323232;
    border: 2px solid #6a6a6a;
    border-radius: 12px;
    box-shadow: 0 0 0 1px #000, 0 2px 8px rgba(0, 0, 0, 0.3);
}

.popover-tip {
    position: absolute;
    left: 20px;
    top: -27px;
}

.popover-item {
    display: flex;
    align-items: center;
    gap: 15px;
    height: 44px;
    font-size: 25px;
    color: #e8e8e8;
    white-space: nowrap;
}
```
